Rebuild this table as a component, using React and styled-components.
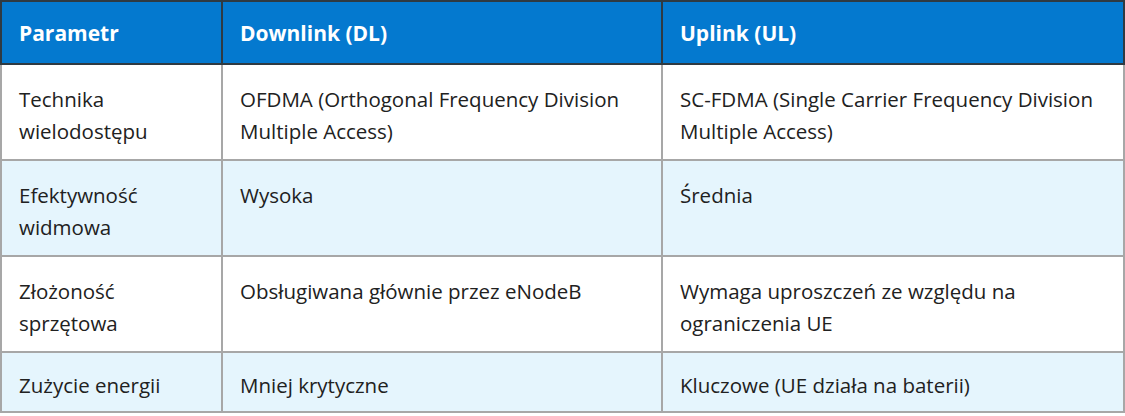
import React from 'react';
import styled, { createGlobalStyle } from 'styled-components';

const GlobalStyle = createGlobalStyle`
    html, body {
        margin: 0;
        padding: 0;
        background: #ffffff;
    }
    body {
        font-family: "Open Sans", "Noto Sans", "Liberation Sans", sans-serif;
    }
`;

const Table = styled.table`
    width: 1125px;
    border-collapse: collapse;
    table-layout: fixed;
    font-family: "Open Sans", "Noto Sans", "Liberation Sans", sans-serif;
    font-size: 20.5px;
    line-height: 32px;
    color: #212121;
    border: 2px solid #a7a7a7;
`;

const HeadCell = styled.th`
    background: #0479cf;
    color: #ffffff;
    font-weight: 700;
    font-size: 21px;
    line-height: 31px;
    text-align: left;
    padding: 16px 17px 14px;
    border: 2px solid #2f3a42;
`;

const Row = styled.tr`
    background: ${(p) => (p.$shaded ? '#e5f5fd' : '#ffffff')};
`;

const Cell = styled.td`
    vertical-align: top;
    padding: ${(p) => (p.$tight ? '16px 17px 10px' : '18px 17px 12px')};
    border: 2px solid #a7a7a7;
`;

const rows = [
    ['Technika wielodostępu', 'OFDMA (Orthogonal Frequency Division Multiple Access)', 'SC-FDMA (Single Carrier Frequency Division Multiple Access)'],
    ['Efektywność widmowa', 'Wysoka', 'Średnia'],
    ['Złożoność sprzętowa', 'Obsługiwana głównie przez eNodeB', 'Wymaga uproszczeń ze względu na ograniczenia UE'],
    ['Zużycie energii', 'Mniej krytyczne', 'Kluczowe (UE działa na baterii)'],
];

const App = () => {
    return (
        <>
            <GlobalStyle />
            <Table>
                <colgroup>
                    <col style={{ width: 221 }} />
                    <col style={{ width: 440 }} />
                    <col />
                </colgroup>
                <thead>
                    <tr>
                        <HeadCell>Parametr</HeadCell>
                        <HeadCell>Downlink (DL)</HeadCell>
                        <HeadCell>Uplink (UL)</HeadCell>
                    </tr>
                </thead>
                <tbody>
                    {rows.map((r, i) => (
                        <Row key={r[0]} $shaded={i % 2 === 1}>
                            {r.map((c) => (
                                <Cell key={c} $tight={i === rows.length - 1}>{c}</Cell>
                            ))}
                        </Row>
                    ))}
                </tbody>
            </Table>
        </>
    );
};

export default App;
